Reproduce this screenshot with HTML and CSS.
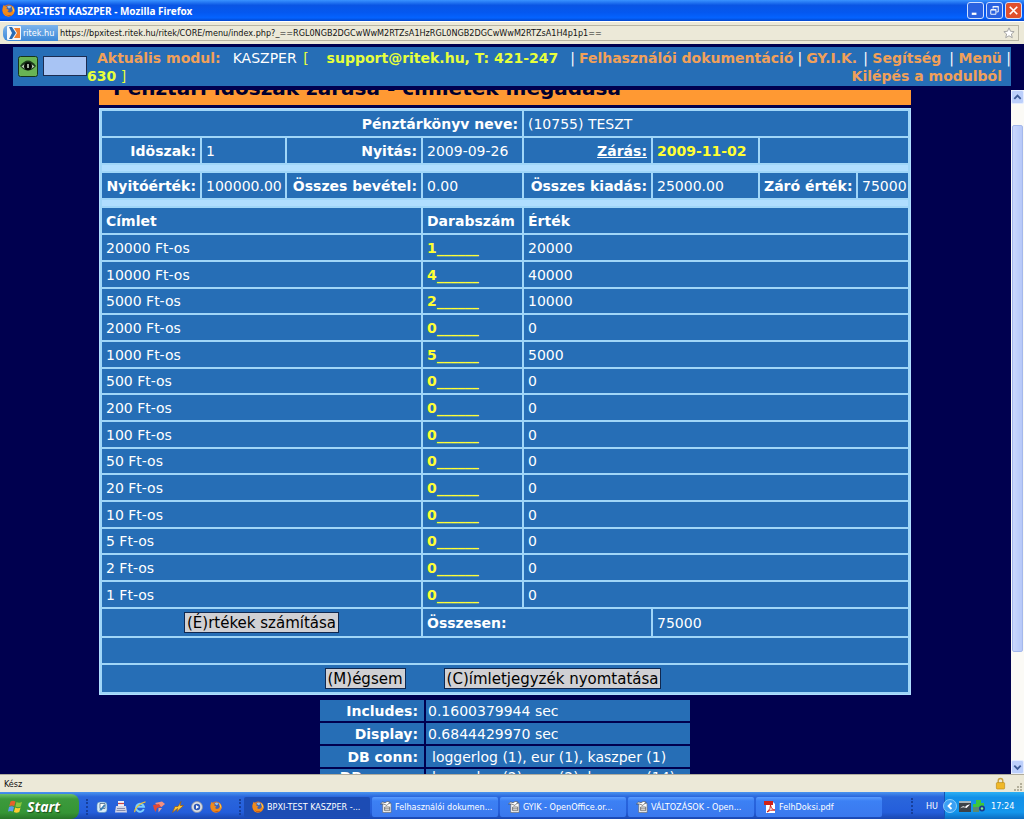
FILE: index.html
```html
<!DOCTYPE html>
<html lang="hu">
<head>
<meta charset="utf-8">
<title>BPXI-TEST KASZPER</title>
<link rel="stylesheet" href="styles.css">
</head>
<body>
<svg class="defs" aria-hidden="true">
  <symbol id="fox" viewBox="0 0 12 12"><circle cx="6" cy="6" r="5.6" fill="#e8751a"/><circle cx="6.3" cy="4.9" r="3.5" fill="#3d62b8"/><path d="M4.6 2.2q2-1.4 4 0l-1 1.500-1.400.5z" fill="#8fc0f4"/><path d="M.6 3.500L1.600.8l1.600 1.800 2 .2-1.200 1.400L6.400 5.600 5 7l1.600.9q2.800 0 3.600-2.900l.4-2.600q2 4.600-.6 7.400Q7 12.600 3 10.800.1 8.500.6 3.500z" fill="#f08a1c"/><path d="M8.800 1.800q3 2.600 2.400 6L9.800 5z" fill="#ffd24a"/><path d="M1.500 8q3 3.500 7.500 2.200-3.500 2.500-7.500-2.200z" fill="#a83208"/></symbol>
  <symbol id="doc" viewBox="0 0 12 13"><path d="M2.500 2.500h9v10h-9z" fill="#fafafa" stroke="#666" stroke-width=".7"/><path d="M0 3.200Q2-.2 5 1.800 7-.5 10.500 1.200L7 4.800Q3.500 2.600 0 3.200z" fill="#fff" stroke="#444" stroke-width=".7"/><path d="M4.500 6.500h5.500v4H4.500zM4.500 8.500h5.500" fill="none" stroke="#555" stroke-width=".8"/></symbol>
</svg>

<header class="titlebar">
  <svg class="ico12"><use href="#fox"/></svg>
  <span class="titlebar-text">BPXI-TEST KASZPER - Mozilla Firefox</span>
  <button class="win" aria-label="Kis méret"><svg viewBox="0 0 16 16"><path d="M4 11.500h5" stroke="#fff" stroke-width="2.400"/></svg></button>
  <button class="win" aria-label="Előző méret"><svg viewBox="0 0 16 16" fill="none" stroke="#fff"><path d="M6.500 6V4h5.500v5.500h-2M6 4h6.500" /><path d="M4 7.500h5.500V12H4zM4 7h6"/></svg></button>
  <button class="win win-close" aria-label="Bezárás"><svg viewBox="0 0 16 16"><path d="M4 4l8 8M12 4l-8 8" stroke="#fff" stroke-width="1.800"/></svg></button>
</header>

<div class="urlbar">
  <div class="site"><svg viewBox="0 0 14 14" class="ico14"><rect width="14" height="14" rx="1" fill="#f4f7fa"/><path d="M2 1h3l4 6-4 6H2l3-6z" fill="#2a6cb4"/><path d="M7 2h6v10H7l3-5z" fill="#f08030"/></svg>ritek.hu</div>
  <input class="url" aria-label="Cím" value="https://bpxitest.ritek.hu/ritek/CORE/menu/index.php?_==RGL0NGB2DGCwWwM2RTZsA1HzRGL0NGB2DGCwWwM2RTZsA1H4p1p1==">
  <svg class="star" viewBox="0 0 14 14"><path d="M7 1l1.800 4 4.200.4-3.200 2.800 1 4.300L7 10.200l-3.800 2.300 1-4.300L1 5.400 5.200 5z" fill="#fff" stroke="#999" stroke-width="1"/></svg>
</div>

<main class="page">
  <div class="menu">
    <svg class="eye" viewBox="0 0 20 21"><rect x=".5" y=".5" width="19" height="20" rx="2" fill="#68b455" stroke="#17351a"/><path d="M2 10Q10-1 18 10q-8 9-16 0z" fill="#1c3a1c"/><path d="M3.500 10.500Q10 3.500 16.500 10.500q-6.500 6-13 0z" fill="#b9cdb5"/><circle cx="10" cy="10.300" r="4" fill="#050805"/><path d="M10 8v4" stroke="#cfe3cc" stroke-width="1.500"/></svg>
    <input class="code" aria-label="Kód">
    <div class="module"><span class="label">Aktuális modul:</span><span class="name">KASZPER</span> <span class="light">[</span><b class="support">support@ritek.hu, T: 421-247</b><br><b>630</b> <span class="light">]</span></div>
    <nav class="links">|<a href="#" class="docs">Felhasználói dokumentáció</a>|<a href="#" class="faq">GY.I.K.</a>| <a href="#" class="help">Segítség</a>| <a href="#">Menü</a> |<br><a href="#" class="exit">Kilépés a modulból</a></nav>
  </div>

  <div class="view">
    <div class="content">
      <div class="heading"><h1>Pénztári időszak zárása - címletek megadása</h1></div>
      <table class="grid">
        <colgroup><col class="c1"><col class="c2"><col class="c3"><col class="c4"><col class="c5"><col class="c6"><col class="c7"><col></colgroup>
        <tbody>
          <tr><th colspan="4" class="r">Pénztárkönyv neve:</th><td colspan="4">(10755) TESZT</td></tr>
          <tr><th class="r">Idöszak:</th><td>1</td><th class="r">Nyitás:</th><td>2009-09-26</td><th class="r"><u>Zárás:</u></th><td class="hot">2009-11-02</td><td colspan="2"></td></tr>
          <tr class="band"><td colspan="8"></td></tr>
          <tr><th class="r">Nyitóérték:</th><td>100000.00</td><th class="r">Összes bevétel:</th><td>0.00</td><th class="r">Összes kiadás:</th><td>25000.00</td><th class="r">Záró érték:</th><td>75000</td></tr>
          <tr class="band"><td colspan="8"></td></tr>
          <tr><th colspan="3">Címlet</th><th>Darabszám</th><th colspan="4">Érték</th></tr>
        </tbody>
        <tbody class="notes">
          <tr><td colspan="3"><label for="n1">20000 Ft-os</label></td><td><input id="n1" value="1______"></td><td colspan="4">20000</td></tr>
          <tr><td colspan="3"><label for="n2">10000 Ft-os</label></td><td><input id="n2" value="4______"></td><td colspan="4">40000</td></tr>
          <tr><td colspan="3"><label for="n3">5000 Ft-os</label></td><td><input id="n3" value="2______"></td><td colspan="4">10000</td></tr>
          <tr><td colspan="3"><label for="n4">2000 Ft-os</label></td><td><input id="n4" value="0______"></td><td colspan="4">0</td></tr>
          <tr><td colspan="3"><label for="n5">1000 Ft-os</label></td><td><input id="n5" value="5______"></td><td colspan="4">5000</td></tr>
          <tr><td colspan="3"><label for="n6">500 Ft-os</label></td><td><input id="n6" value="0______"></td><td colspan="4">0</td></tr>
          <tr><td colspan="3"><label for="n7">200 Ft-os</label></td><td><input id="n7" value="0______"></td><td colspan="4">0</td></tr>
          <tr><td colspan="3"><label for="n8">100 Ft-os</label></td><td><input id="n8" value="0______"></td><td colspan="4">0</td></tr>
          <tr><td colspan="3"><label for="n9">50 Ft-os</label></td><td><input id="n9" value="0______"></td><td colspan="4">0</td></tr>
          <tr><td colspan="3"><label for="n10">20 Ft-os</label></td><td><input id="n10" value="0______"></td><td colspan="4">0</td></tr>
          <tr><td colspan="3"><label for="n11">10 Ft-os</label></td><td><input id="n11" value="0______"></td><td colspan="4">0</td></tr>
          <tr><td colspan="3"><label for="n12">5 Ft-os</label></td><td><input id="n12" value="0______"></td><td colspan="4">0</td></tr>
          <tr><td colspan="3"><label for="n13">2 Ft-os</label></td><td><input id="n13" value="0______"></td><td colspan="4">0</td></tr>
          <tr><td colspan="3"><label for="n14">1 Ft-os</label></td><td><input id="n14" value="0______"></td><td colspan="4">0</td></tr>
        </tbody>
        <tbody>
          <tr class="tall"><td colspan="3" class="c"><button class="btn">(É)rtékek számítása</button></td><th colspan="2">Összesen:</th><td colspan="3">75000</td></tr>
          <tr><td colspan="8"></td></tr>
          <tr class="tall"><td colspan="8"><div class="actions"><button class="btn">(M)égsem</button><button class="btn">(C)ímletjegyzék nyomtatása</button></div></td></tr>
        </tbody>
      </table>
      <table class="stats">
        <tr><th>Includes:</th><td>0.1600379944 sec</td></tr>
        <tr><th>Display:</th><td>0.6844429970 sec</td></tr>
        <tr><th>DB conn:</th><td class="in">loggerlog (1), eur (1), kaszper (1)</td></tr>
        <tr class="up"><th>DB query:</th><td class="in">loggerlog (2), eur (2), kaszper (14)</td></tr>
      </table>
    </div>
    <div class="scroll">
      <button aria-label="Fel"><svg viewBox="0 0 12 12"><path d="M2.500 8L6 4.500 9.500 8" fill="none" stroke="#3d5a96" stroke-width="2"/></svg></button>
      <div class="track"><div class="thumb"></div></div>
      <button aria-label="Le"><svg viewBox="0 0 12 12"><path d="M2.500 4.500L6 8l3.500-3.500" fill="none" stroke="#3d5a96" stroke-width="2"/></svg></button>
    </div>
  </div>
</main>

<div class="status"><span class="status-text">Kész</span>
  <svg class="lock" viewBox="0 0 12 14"><path d="M3.500 7V4a2.500 2.500 0 0 1 5 0v3" fill="none" stroke="#c8a040" stroke-width="1.500"/><rect x="1.500" y="6" width="9" height="7" rx="1" fill="#f0b828" stroke="#b88818" stroke-width=".7"/></svg>
  <svg class="grip" viewBox="0 0 9 9" fill="#b4b09c"><path d="M6 0h2v2H6zM3 3h2v2H3zM6 3h2v2H6zM0 6h2v2H0zM3 6h2v2H3zM6 6h2v2H6z"/></svg>
</div>

<footer class="taskbar">
  <button class="start"><svg viewBox="0 0 15 14"><path d="M2.500 1.500q2.500-1.500 5 0L6.300 6q-2.500-1.200-5 0z" fill="#e8602c"/><path d="M8.500 2q2.500 1.400 5.500 0l-1.200 4.600q-2.800 1.400-5.400 0z" fill="#8cc63c"/><path d="M1 7q2.500-1.300 5 0l-1.200 4.600q-2.500-1.300-4.800 0z" fill="#5a9af0"/><path d="M7.200 7.600q2.700 1.300 5.400 0L11.300 12q-2.800 1.400-5.400 0z" fill="#fccc30"/></svg>Start</button>
  <div class="quick">
    <i class="dots"></i>
    <svg viewBox="0 0 12 12"><rect x="1" y="1" width="10" height="10.500" rx="3" fill="#d8ecf8" stroke="#5a8fb8" stroke-width=".6"/><path d="M4 2.500h5v5H4z" fill="#fff" stroke="#357" stroke-width=".7"/><path d="M3 9.500l5-6 1.500 1-4 5z" fill="#3a80b8"/></svg>
    <svg viewBox="0 0 12 12"><path d="M3 0h6v5H3z" fill="#f0f0f6"/><path d="M3 2.500h6" stroke="#c44" stroke-width="1.200"/><path d="M1 5h10l1 6.500H0z" fill="#d4d6e6"/><path d="M2 7.500h8M1.500 9.500h9" stroke="#7078a0" stroke-width=".8"/></svg>
    <svg viewBox="0 0 12 12"><path d="M9.800 8.200A4 4 0 1 1 10 5.800H3.200" fill="none" stroke="#7cd0ff" stroke-width="1.900"/><path d="M.8 11.200C0 8 6 1.600 11.500.8" fill="none" stroke="#f4c430" stroke-width="1.200"/></svg>
    <svg viewBox="0 0 12 12"><path d="M2 2l7-1.500L12 3 8.500 6 5 5z" fill="#f49080"/><path d="M0 4l6-1 2 3-4 1-1.500 4L1 8z" fill="#e04838"/><path d="M5.500 7H9l-3.500 4.500z" fill="#e8a090"/></svg>
    <svg viewBox="0 0 12 12"><path d="M.5 11.500L3 5.500h3L9 .5l-1 4h3.500L5 10.500l.5-3z" fill="#fcc838" stroke="#9a5c10" stroke-width=".7"/></svg>
    <svg viewBox="0 0 12 12"><circle cx="6" cy="6" r="5.500" fill="#d9dde4" stroke="#8a90a0" stroke-width=".8"/><circle cx="6" cy="6" r="3.200" fill="#2c58b8"/><path d="M5 4l3 2-3 2z" fill="#fff"/></svg>
    <svg viewBox="0 0 12 12"><use href="#fox"/></svg>
    <i class="dots last"></i>
  </div>
  <div class="tasks">
    <button class="task on"><svg><use href="#fox"/></svg><span>BPXI-TEST KASZPER -...</span></button>
    <button class="task"><svg><use href="#doc"/></svg><span>Felhasználói dokumen...</span></button>
    <button class="task"><svg><use href="#doc"/></svg><span>GYIK - OpenOffice.or...</span></button>
    <button class="task"><svg><use href="#doc"/></svg><span>VÁLTOZÁSOK - Open...</span></button>
    <button class="task"><svg viewBox="0 0 12 12"><path d="M2 1h7l2 2v9H2z" fill="#fff"/><path d="M0 0h9v4H0z" fill="#d02018"/><path d="M3 11q4-3 3.500-7 1 5 4.500 5-5-.5-8 2z" fill="none" stroke="#d02018" stroke-width="1"/></svg><span>FelhDoksi.pdf</span></button>
  </div>
  <div class="lang"><i class="dots"></i>HU</div>
  <div class="tray">
    <svg class="arrow" viewBox="0 0 14 14"><circle cx="7" cy="7" r="6.500" fill="#3ba0f4" stroke="#a6dcff" stroke-width=".8"/><path d="M8.500 4L5.500 7l3 3" fill="none" stroke="#fff" stroke-width="1.800"/></svg>
    <svg viewBox="0 0 12 12"><rect y="1" width="12" height="11" fill="#3c4248"/><path d="M0 1h12v2H0z" fill="#a8b4b8"/><path d="M1 8.500q3-3.500 5-1.500 2-3 5-2.500L7.500 8Q4 6.500 1 8.500z" fill="#fff"/></svg>
    <svg viewBox="0 0 12 12"><path d="M3 0h5v3h3v4H6v3H3V7H0V4h3z" fill="#3cc83c"/><path d="M0 7h6v5H0z" fill="#5a8a70"/><circle cx="9" cy="8.500" r="3" fill="#1c3c8c"/><circle cx="9" cy="8.500" r="1.200" fill="#8cf08c"/></svg>
    <span>17:24</span>
  </div>
</footer>
</body>
</html>
```
FILE: styles.css
```css
* { box-sizing: border-box; }
html, body { height: 100%; }
body {
  margin: 0;
  display: flex;
  flex-direction: column;
  overflow: hidden;
  background: #00004f;
  font: 14px/18px Verdana, "DejaVu Sans", sans-serif;
  color: #fff;
}
button, input { font: inherit; color: inherit; margin: 0; padding: 0; border: 0; background: none; }
a { color: #f0a05a; font-weight: bold; text-decoration: none; }
.defs { position: absolute; width: 0; height: 0; }

/* Window title */
.titlebar {
  flex: none;
  height: 21px;
  display: flex;
  align-items: center;
  gap: 2px;
  padding: 0 2px;
  background: linear-gradient(#3a93ff, #0a55e4 25%, #0458f0 60%, #0463ff 85%, #0346cc);
  font: bold 10px/16px "Noto Sans", sans-serif;
}
.ico12 { width: 13px; height: 13px; }
.ico14 { width: 14px; height: 14px; }
.titlebar-text { flex: 1; }
.win { width: 17px; height: 17px; border: 1px solid #cfe0ff; border-radius: 3px; background: #2a62e0; }
.win svg { display: block; width: 15px; height: 15px; }
.win-close { background: #e0502c; }

/* Address bar */
.urlbar {
  flex: none;
  height: 23px;
  display: flex;
  align-items: stretch;
  margin: 0;
  padding: 3px 5px 3px 3px;
  background: #ece9d8;
  border-top: 1px solid #fff;
  color: #111;
  font: 9px/14px "DejaVu Sans Condensed", sans-serif;
}
.site {
  display: flex;
  flex: none;
  align-items: center;
  gap: 2px;
  width: 55px;
  padding-left: 4px;
  border-radius: 6px 0 0 6px;
  background: linear-gradient(#7cb4ec, #3c88d8);
  color: #fff;
}
.url { flex: 1; padding-left: 2px; border: 1px solid #b8b5a4; border-width: 1px 0; }
.star { width: 19px; padding: 0 3px; border: 1px solid #b8b5a4; border-left: 0; }

/* Page */
.page { flex: 1; min-height: 0; display: flex; flex-direction: column; padding-top: 3px; }
.menu {
  flex: none;
  display: flex;
  margin: 0 13px 4px;
  padding: 2px 0 1px 5px;
  min-height: 39px;
  background: #266eb6;
  white-space: nowrap;
}
.eye { width: 20px; height: 21px; margin: 7px 5px 0 0; flex: none; }
.code { width: 44px; height: 20px; margin-top: 7px; border: 1px solid #1c2c50; background: #a8c4f4; }
.module { color: #e6ff3c; flex: 1; }
.label { color: #f0a05a; font-weight: bold; margin: 0 12px 0 10px; }
.name { color: #fff; margin-right: 2px; }
.support { margin-left: 18px; }
.links { text-align: right; }
.docs { margin: 0 4px; }
.faq { margin: 0 6px 0 4px; }
.help { margin-right: 8px; }
.exit { margin-right: 9px; }

.view { flex: 1; min-height: 0; display: flex; }
.content { flex: 1; min-width: 0; overflow: hidden; padding: 0 100px 0 99px; }
.heading {
  height: 15px;
  margin-bottom: 3px;
  overflow: hidden;
  display: flex;
  align-items: flex-end;
  padding: 0 14px 5px;
  background: #ff9933;
}
h1 { margin: 0; font-size: 20px; line-height: 24px; color: #000030; white-space: nowrap; }

.grid {
  width: 100%;
  table-layout: fixed;
  border-collapse: separate;
  border-spacing: 2px;
  border: 1px solid #b0deff;
  background: #a0d6f8;
}
.c1 { width: 98px; } .c2 { width: 83px; } .c3 { width: 134px; } .c4 { width: 99px; }
.c5 { width: 127px; } .c6 { width: 105px; } .c7 { width: 96px; }
.grid td, .grid th { height: 25px; padding: 0 4px; background: #266eb6; text-align: left; white-space: nowrap; }
.grid .r { text-align: right; }
.grid .c { text-align: center; }
.grid .band td { height: 6px; background: #b0deff; }
.grid .hot { color: #ffff33; font-weight: bold; }
.notes tr:nth-child(3n) td { height: 24px; }
.notes input { display: block; width: 60px; height: 18px; color: #ffff33; font-weight: bold; }
.grid .tall td, .grid .tall th { height: 27px; }
.btn { display: block; height: 21px; padding: 0 2px; border: 1px solid #102850; background: #d0d0d4; color: #000; font-size: 15px; line-height: 18px; }
.c .btn { margin: 0 auto; }
.actions { display: flex; justify-content: center; gap: 38px; padding-right: 24px; }

.stats { width: 374px; margin: 3px auto 0; border-spacing: 2px; }
.stats th, .stats td { height: 21px; padding: 0 2px; background: #266eb6; text-align: left; white-space: nowrap; }
.stats th { width: 104px; padding-right: 6px; text-align: right; }
.stats .in { padding-left: 6px; }
.stats .up th, .stats .up td { vertical-align: top; line-height: 16px; }

.scroll { width: 13px; flex: none; display: flex; flex-direction: column; background: #fbfaf6; }
.scroll button { height: 14px; border: 1px solid #e4ecff; border-radius: 2px; background: #bccffb; }
.scroll svg { display: block; width: 11px; height: 12px; }
.track { flex: 1; padding: 21px 1px 0; }
.thumb { height: 83%; border: 1px solid #a4b8ec; border-radius: 2px; background: linear-gradient(90deg, #cad7fd, #b6c8f8); }

/* Status bar */
.status {
  flex: none;
  height: 18px;
  display: flex;
  align-items: center;
  gap: 8px;
  padding: 0 1px 0 4px;
  border-top: 1px solid #b0ac9c;
  background: #ece9d8;
  color: #111;
  font: 9px/14px "DejaVu Sans Condensed", sans-serif;
}
.status-text { flex: 1; }
.lock { width: 11px; height: 13px; }
.grip { width: 9px; height: 9px; align-self: flex-end; }

/* Taskbar */
.taskbar {
  flex: none;
  height: 27px;
  display: flex;
  background: linear-gradient(#4a94f0, #2a66dc 18%, #245edb 75%, #1a47b0);
  font: 9px/14px "DejaVu Sans Condensed", sans-serif;
}
.taskbar svg { width: 12px; height: 12px; flex: none; }
.taskbar .start {
  width: 79px;
  display: flex;
  align-items: center;
  gap: 4px;
  margin-top: 2px;
  padding-left: 8px;
  border-radius: 0 8px 8px 0;
  background: linear-gradient(#6cc06c, #3c9a3c 20%, #359535 75%, #287428);
  font: italic bold 14px/20px "Open Sans", sans-serif;
  text-shadow: 1px 1px 1px #1c501c;
}
.taskbar .start svg { width: 15px; height: 14px; }
.quick { width: 165px; display: flex; align-items: center; gap: 7px; padding: 2px 0 0 7px; }
.dots { width: 3px; height: 16px; border-left: 2px dotted #163f9c; }
.last { margin-left: 10px; }
.tasks { flex: 1; display: flex; gap: 2px; padding: 5px 0 2px; min-width: 0; }
.task {
  flex: 0 1 126px;
  min-width: 0;
  display: flex;
  align-items: center;
  gap: 3px;
  padding-left: 8px;
  border-radius: 2px;
  background: linear-gradient(#5a9cff, #3c80f4 20%, #3a78ee);
  white-space: nowrap;
  overflow: hidden;
}
.on { background: #1c4cb4; }
.lang { width: 33px; display: flex; align-items: center; gap: 12px; }
.tray {
  width: 80px;
  display: flex;
  align-items: center;
  gap: 2px;
  border-left: 1px solid #1454b4;
  background: linear-gradient(#2cb0f4, #1290e8 20%, #1496ec 75%, #0c6cc0);
}
.taskbar .arrow { width: 14px; height: 14px; margin-left: -2px; }
.tray span { margin-left: 4px; }
```
